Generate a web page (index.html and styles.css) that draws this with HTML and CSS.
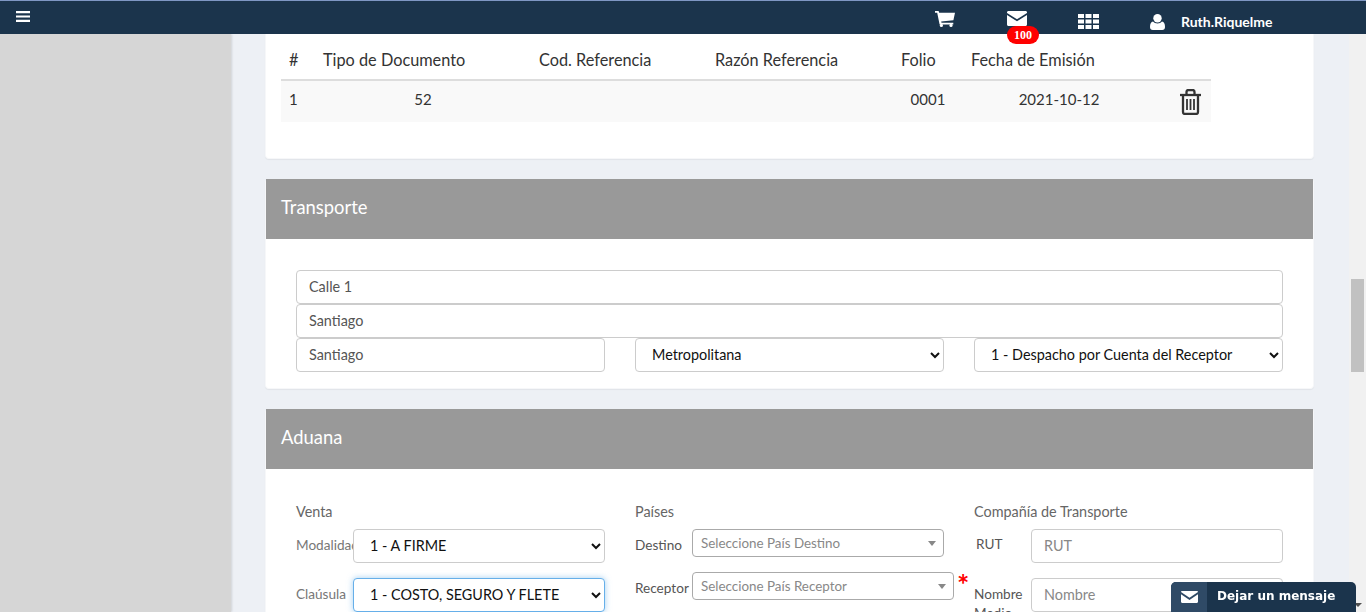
FILE: index.html
```html
<!DOCTYPE html>
<html lang="es">
<head>
    <meta charset="UTF-8">
    <title>Documento</title>
    <link rel="stylesheet" href="styles.css">
</head>
<body>

<header class="topbar">
    <svg class="icon-bars" viewBox="0 0 14 12"><path d="M0 0h14v2.200H0zM0 4.400h14v2.200H0zM0 8.800h14V11H0z"/></svg>
    <nav class="topbar-nav">
        <span class="nav-item nav-cart">
            <svg width="20" height="16" viewBox="0 0 20 16"><path d="M0 0h3.600l.6 1.800H20l-1.600 7.400-12.200 1.200.3 1.300h11.800v1.700H4.600L2.200 1.700H0z"/><circle cx="6.400" cy="14.400" r="1.600"/><circle cx="16" cy="14.400" r="1.600"/></svg>
        </span>
        <span class="nav-item nav-mail">
            <svg width="20" height="15" viewBox="0 0 20 15"><path d="M1.500 0h17c.8 0 1.500.6 1.500 1.400v.5l-10 6.300L0 1.900v-.5C0 .6.700 0 1.500 0z"/><path d="M0 4l10 6.300L20 4v9.500c0 .8-.7 1.500-1.500 1.500h-17C.7 15 0 14.300 0 13.500z"/></svg>
            <span class="badge">100</span>
        </span>
        <span class="nav-item nav-grid">
            <svg width="21" height="15" viewBox="0 0 21 15"><path d="M0 0h6v4H0zM7.500 0h6v4h-6zM15 0h6v4h-6zM0 5.500h6v4H0zM7.500 5.500h6v4h-6zM15 5.500h6v4h-6zM0 11h6v4H0zM7.500 11h6v4h-6zM15 11h6v4h-6z"/></svg>
        </span>
        <span class="nav-item nav-user">
            <svg width="15" height="16" viewBox="0 0 15 16"><circle cx="7.500" cy="4.200" r="4.200"/><path d="M3 7.500c1 1.300 2.700 2 4.500 2s3.500-.7 4.500-2c2 .4 3 2.300 3 5.500 0 1.800-1 3-2.800 3H2.800C1 16 0 14.800 0 13c0-3.200 1-5.100 3-5.500z"/></svg>
            <span class="user-name">Ruth.Riquelme</span>
        </span>
    </nav>
</header>

<div class="layout">
    <aside class="sidebar"></aside>

    <main class="content">
        <section class="card card-refs">
            <table class="refs">
                <thead>
                    <tr>
                        <th class="c-num">#</th>
                        <th class="c-tipo">Tipo de Documento</th>
                        <th class="c-cod">Cod. Referencia</th>
                        <th class="c-razon">Razón Referencia</th>
                        <th class="c-folio">Folio</th>
                        <th class="c-fecha">Fecha de Emisión</th>
                        <th class="c-del"></th>
                    </tr>
                </thead>
                <tbody>
                    <tr>
                        <td>1</td>
                        <td class="center">52</td>
                        <td></td>
                        <td></td>
                        <td class="center">0001</td>
                        <td class="center">2021-10-12</td>
                        <td class="del">
                            <svg width="21" height="26" viewBox="0 0 21 26" fill="none" stroke="#333" stroke-width="2.300"><path d="M0 6h21"/><path d="M6.500 5.500V3c0-1 .7-2 2-2h4c1.300 0 2 1 2 2v2.500"/><path d="M3 6v17c0 1.300.8 2 2 2h11c1.200 0 2-.7 2-2V6"/><path d="M7 10v11M10.500 10v11M14 10v11" stroke-width="1.800"/></svg>
                        </td>
                    </tr>
                </tbody>
            </table>
        </section>

        <section class="card">
            <h3 class="card-head">Transporte</h3>
            <div class="card-body body-transporte">
                <input class="field" type="text" value="Calle 1">
                <input class="field" type="text" value="Santiago">
                <div class="three-cols">
                    <input class="field" type="text" value="Santiago">
                    <select class="field field-select"><option>Metropolitana</option></select>
                    <select class="field field-select"><option>1 - Despacho por Cuenta del Receptor</option></select>
                </div>
            </div>
        </section>

        <section class="card">
            <h3 class="card-head">Aduana</h3>
            <div class="card-body body-aduana">
                <div class="three-cols">
                    <div>
                        <h4 class="group-title">Venta</h4>
                        <div class="row">
                            <label class="row-label">Modalidad</label>
                            <select class="field field-select"><option>1 - A FIRME</option></select>
                        </div>
                        <div class="row">
                            <label class="row-label">Claúsula</label>
                            <select class="field field-select is-focus"><option>1 - COSTO, SEGURO Y FLETE</option></select>
                        </div>
                    </div>
                    <div>
                        <h4 class="group-title">Países</h4>
                        <div class="row row-small">
                            <label class="row-label dark">Destino</label>
                            <div class="combo">Seleccione País Destino</div>
                        </div>
                        <div class="row row-small row-wide">
                            <label class="row-label dark">Receptor</label>
                            <div class="combo">Seleccione País Receptor</div>
                            <span class="required">*</span>
                        </div>
                    </div>
                    <div>
                        <h4 class="group-title">Compañía de Transporte</h4>
                        <div class="row">
                            <label class="row-label dark label-rut">RUT</label>
                            <input class="field" type="text" placeholder="RUT">
                        </div>
                        <div class="row">
                            <label class="row-label dark label-wrap">Nombre Medio</label>
                            <input class="field" type="text" placeholder="Nombre">
                        </div>
                    </div>
                </div>
            </div>
        </section>
    </main>

    <div class="scrollbar">
        <div class="scroll-thumb"></div>
        <div class="scroll-arrow"></div>
    </div>
</div>

<div class="msg-widget">
    <span class="msg-icon">
        <svg width="17" height="12" viewBox="0 0 17 12" fill="#fff"><path d="M1.200 0h14.600c.7 0 1.200.5 1.200 1.100L8.500 6.800 0 1.100C0 .5.500 0 1.200 0z"/><path d="M0 3.300l8.500 5.700L17 3.300v7.500c0 .7-.5 1.200-1.200 1.200H1.200C.5 12 0 11.500 0 10.800z"/></svg>
    </span>
    <span class="msg-text">Dejar un mensaje</span>
</div>

</body>
</html>
```

FILE: styles.css
```css
* { box-sizing: border-box; }
html, body { height: 100%; }
body { margin: 0; display: flex; flex-direction: column; overflow: hidden; font-family: Lato, "Open Sans", sans-serif; font-size: 14.4px; color: #333; background: #edf0f5; }

.topbar { flex: 0 0 34px; display: flex; align-items: flex-start; background: #1b344c; border-top: 1px solid #7f97c4; position: relative; z-index: 2; }
.icon-bars { width: 14px; height: 12px; margin: 10px 0 0 16px; fill: #fff; }
.topbar-nav { display: flex; margin-left: 905px; }
.nav-item { position: relative; display: flex; fill: #fff; }
.nav-cart { width: 72px; padding-top: 10px; }
.nav-mail { width: 71px; padding-top: 10px; }
.nav-grid { width: 72px; padding-top: 13px; }
.nav-user { padding-top: 13px; }
.user-name { margin-left: 16px; color: #fff; font-weight: 700; font-size: 14px; line-height: 15px; }
.badge { position: absolute; left: 0; top: 25px; width: 32px; height: 18px; border-radius: 9px; background: #f00; color: #fff; font-family: "Liberation Serif", serif; font-weight: 700; font-size: 12px; line-height: 18px; text-align: center; }

.layout { flex: 1; min-height: 0; display: grid; grid-template-columns: 231px 1fr 17px; }
.sidebar { background: #d6d6d6; box-shadow: 1px 0 2px rgba(0, 0, 0, 0.12); }
.content { padding: 0 35px 0 34px; overflow: hidden; min-width: 0; }

.card { background: #fff; border: 1px solid #f6f7f9; border-top: 0; border-radius: 4px; box-shadow: 0 1px 1px rgba(0, 0, 0, 0.05); margin-bottom: 20px; }
.card-refs { padding: 4px 102px 36px 15px; border-radius: 0 0 4px 4px; }
.card-head { margin: 0; height: 60px; padding: 0 15px; background: #999; color: #fff; font-size: 18.4px; font-weight: 400; line-height: 57px; }
.card-body { padding: 31px 30px 16px; }

.refs { width: 930px; table-layout: fixed; border-collapse: collapse; font-size: 15px; }
.refs th { height: 42px; padding: 1px 8px 0; font-size: 16.3px; font-weight: 400; text-align: left; white-space: nowrap; border-bottom: 2px solid #ddd; }
.refs td { height: 42px; padding: 0 8px 5px; background: #f9f9f9; }
.refs .center { text-align: center; }
.refs .del { padding: 3px 10px 0 0; text-align: right; }
.c-num { width: 34px; }
.c-tipo { width: 216px; }
.c-cod { width: 176px; }
.c-razon { width: 186px; }
.c-folio { width: 70px; }
.c-fecha { width: 192px; }
.c-del { width: 56px; }

.field { display: block; width: 100%; height: 34px; padding: 5px 12px 7px; border: 1px solid #ccc; border-radius: 4px; background: #fff; color: #555; font: inherit; }
.field::placeholder { color: #888; }
.field-select { color: #111; }
.is-focus { border-color: #66afe9; box-shadow: 0 0 6px rgba(102, 175, 233, 0.6); outline: 0; }

.three-cols { display: grid; grid-template-columns: repeat(3, 309px); column-gap: 30px; }

.group-title { margin: 0 0 6px; padding-top: 1px; font-size: 14.4px; font-weight: 400; line-height: 22px; color: #666; }
.row { display: grid; grid-template-columns: 57px 252px; margin-bottom: 15px; }
.row-small { height: 28px; }
.row-wide { grid-template-columns: 57px 262px 16px; }
.row-label { padding-top: 8px; white-space: nowrap; color: #777; font-size: 13.6px; }
.row-label.dark { color: #555; }
.label-rut { padding-top: 7px; padding-left: 2px; }
.label-wrap { padding-top: 7px; white-space: normal; line-height: 19px; }

.combo { height: 28px; padding: 0 8px; position: relative; border: 1px solid #aaa; border-radius: 4px; background: #fff; color: #888; font-size: 13.4px; line-height: 26px; }
.combo::after { content: ""; position: absolute; right: 7px; top: 11px; border: 4px solid transparent; border-top: 5px solid #888; border-bottom: 0; }
.required { padding-left: 3px; color: #f00; font-size: 29px; font-weight: 700; line-height: 24px; }

.scrollbar { position: relative; background: #f1f1f1; padding: 245px 2px 0 2px; }
.scroll-thumb { height: 93px; background: #c1c1c1; }
.scroll-arrow { position: absolute; left: 5px; bottom: 5px; border: 4px solid transparent; border-top: 4px solid #505050; border-bottom: 0; }

.msg-widget { position: fixed; right: 10px; bottom: 0; display: flex; width: 185px; height: 30px; border-radius: 5px 5px 0 0; overflow: hidden; background: #1b344c; color: #fff; z-index: 3; }
.msg-icon { flex: 0 0 36px; display: flex; align-items: center; justify-content: center; background: #2f4a66; }
.msg-text { padding-left: 10px; font-family: "DejaVu Sans", sans-serif; font-weight: 700; font-size: 12px; line-height: 28px; white-space: nowrap; }
```
